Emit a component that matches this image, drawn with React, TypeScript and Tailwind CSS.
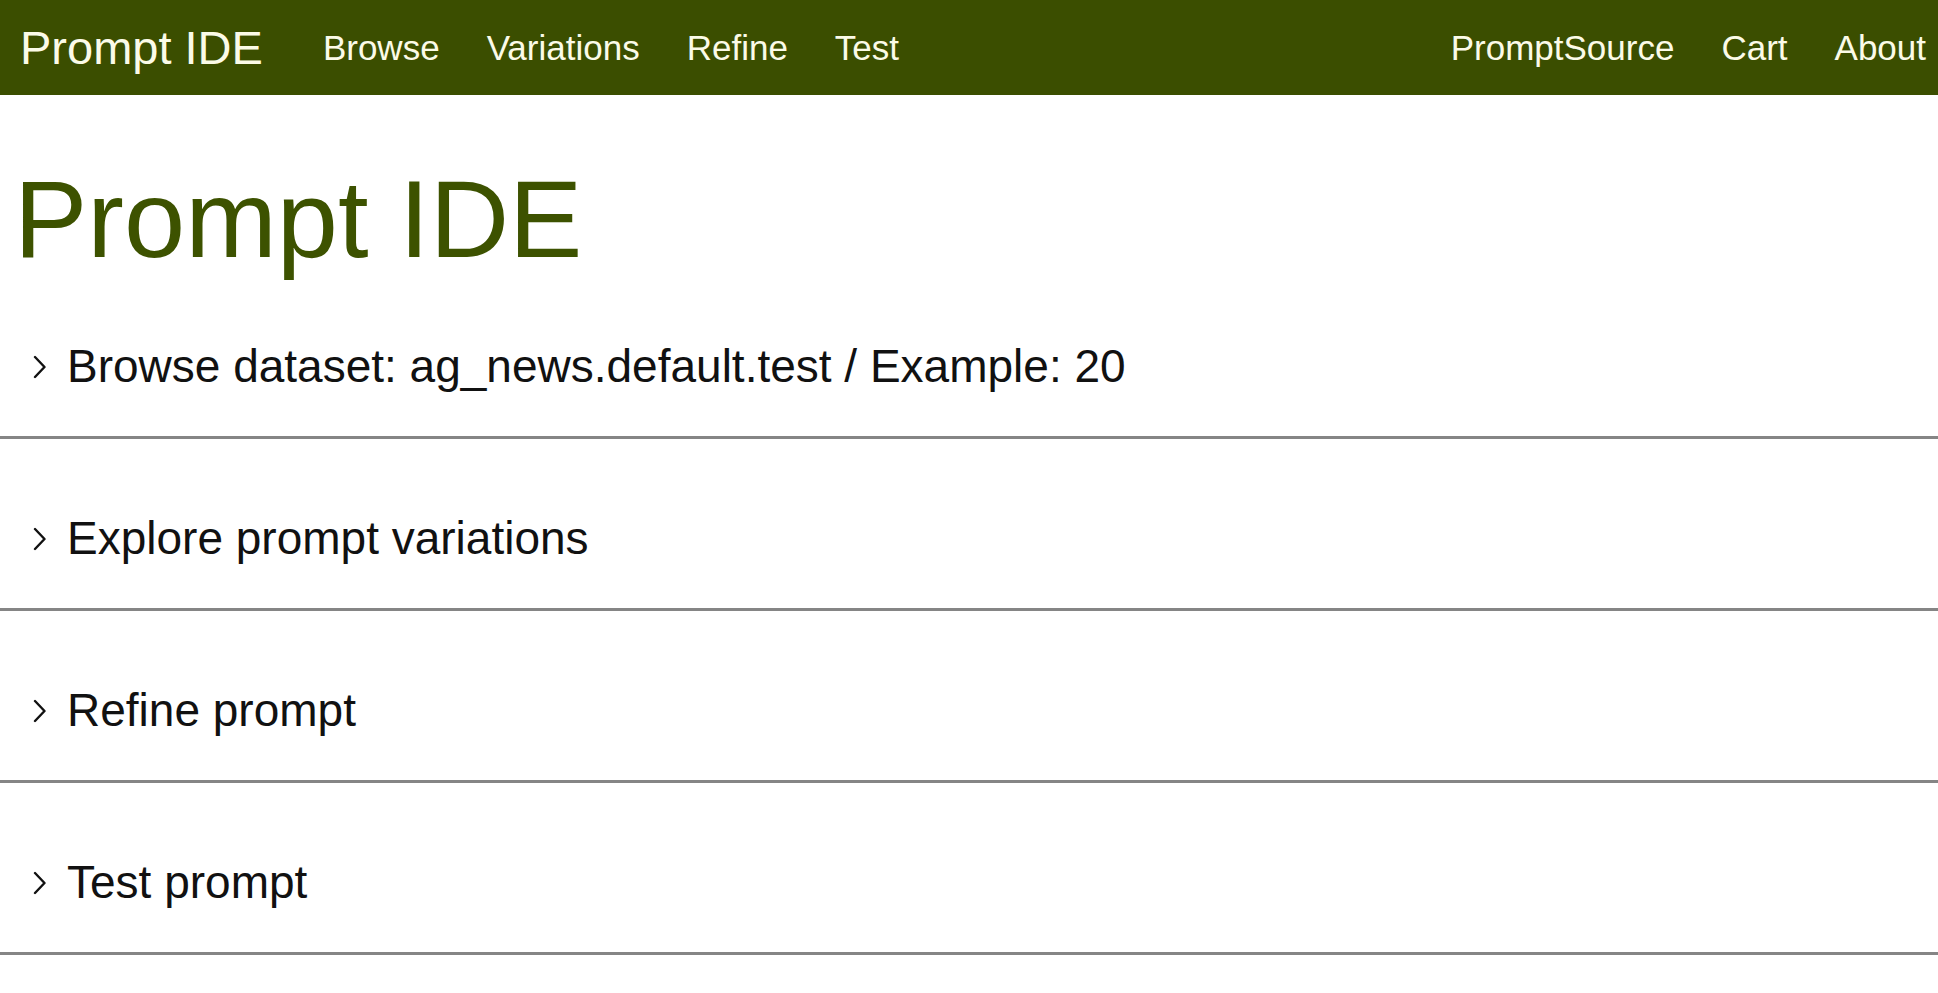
const sections = [
  "Browse dataset: ag_news.default.test / Example: 20",
  "Explore prompt variations",
  "Refine prompt",
  "Test prompt",
];

const leftLinks = ["Browse", "Variations", "Refine", "Test"];
const rightLinks = ["PromptSource", "Cart", "About"];

function Chevron() {
  return (
    <svg
      width="13"
      height="24"
      viewBox="0 0 13 24"
      className="mt-[2px] shrink-0"
      aria-hidden
    >
      <polyline
        points="2,2 11.5,12 2,22"
        fill="none"
        stroke="#111"
        strokeWidth="2.4"
        strokeLinecap="round"
        strokeLinejoin="round"
      />
    </svg>
  );
}

export default function App() {
  return (
    <div className="min-h-screen bg-white font-['Liberation_Sans',Arial,sans-serif]">
      <nav className="flex h-[95px] items-center justify-between bg-[#3b4e00] pr-[12px] pl-[20px] text-[#fbfbe8]">
        <div className="flex items-center">
          <span className="text-[47px] leading-none">Prompt IDE</span>
          <ul className="ml-[60px] flex items-center gap-[47px] text-[35px] leading-none">
            {leftLinks.map((l) => (
              <li key={l}>{l}</li>
            ))}
          </ul>
        </div>
        <ul className="flex items-center gap-[47px] text-[35px] leading-none">
          {rightLinks.map((l) => (
            <li key={l}>{l}</li>
          ))}
        </ul>
      </nav>

      <h1 className="pt-[58px] pl-[14px] text-[110px] leading-[132px] font-normal text-[#3d5200]">
        Prompt IDE
      </h1>

      <div>
        {sections.map((s, i) => (
          <section
            key={s}
            className={`border-b-[3px] border-[#858585] pb-[43px] ${i === 0 ? "pt-[54px]" : "pt-[72px]"}`}
          >
            <div className="flex h-[54px] items-center gap-[21px] pl-[33px] text-[46px] text-[#111]">
              <Chevron />
              <span>{s}</span>
            </div>
          </section>
        ))}
      </div>
    </div>
  );
}
